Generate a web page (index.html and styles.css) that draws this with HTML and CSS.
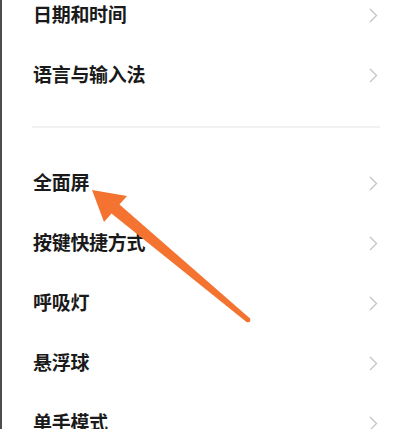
FILE: index.html
```html
<!DOCTYPE html>
<html>
<head>
  <meta charset="utf-8">
  <link rel="stylesheet" href="styles.css">
</head>
<body>
  <div class="screen">
    <div class="group group-top">
      <div class="row"><span class="label">日期和时间</span><svg class="chevron" viewBox="0 0 9 15"><polyline points="1,1 7.5,7.5 1,14"/></svg></div>
      <div class="row"><span class="label">语言与输入法</span><svg class="chevron" viewBox="0 0 9 15"><polyline points="1,1 7.5,7.5 1,14"/></svg></div>
    </div>

    <div class="divider"></div>

    <div class="group">
      <div class="row"><span class="label">全面屏</span><svg class="chevron" viewBox="0 0 9 15"><polyline points="1,1 7.5,7.5 1,14"/></svg></div>
      <div class="row"><span class="label">按键快捷方式</span><svg class="chevron" viewBox="0 0 9 15"><polyline points="1,1 7.5,7.5 1,14"/></svg></div>
      <div class="row"><span class="label">呼吸灯</span><svg class="chevron" viewBox="0 0 9 15"><polyline points="1,1 7.5,7.5 1,14"/></svg></div>
      <div class="row"><span class="label">悬浮球</span><svg class="chevron" viewBox="0 0 9 15"><polyline points="1,1 7.5,7.5 1,14"/></svg></div>
      <div class="row"><span class="label">单手模式</span><svg class="chevron" viewBox="0 0 9 15"><polyline points="1,1 7.5,7.5 1,14"/></svg></div>
    </div>

    <svg class="pointer" width="409" height="429" viewBox="0 0 409 429">
      <polygon fill="#f47330" points="92,190 127,196 119.5,204.5 249.5,318 246.5,322 111.5,213.5 104,222"/>
      <circle cx="248" cy="320" r="2.4" fill="#f47330"/>
    </svg>
  </div>
</body>
</html>
```

FILE: styles.css
```css
* {
  margin: 0;
  padding: 0;
  box-sizing: border-box;
}

body {
  width: 409px;
  height: 429px;
  background: #ffffff;
  font-family: "Noto Sans CJK SC", "Noto Sans", sans-serif;
  overflow: hidden;
}

.screen {
  position: relative;
  height: 429px;
  border-left: 2px solid #4d4d4d;
  overflow: hidden;
}

.group-top {
  margin-top: -15px;
}

.row {
  height: 60px;
  display: flex;
  align-items: center;
  justify-content: space-between;
  padding: 0 31px 3px 31px;
}

.label {
  font-size: 19px;
  font-weight: 600;
  color: #1a1a1a;
  letter-spacing: -0.3px;
  line-height: 24px;
}

.chevron {
  width: 9px;
  height: 15px;
  margin-top: 3px;
  fill: none;
  stroke: #c4c4c4;
  stroke-width: 1.3;
}

.divider {
  height: 2px;
  background: #f1f1f1;
  margin: 21px 29px 25px 30px;
}

.pointer {
  position: absolute;
  top: 0;
  left: -2px;
}
```
